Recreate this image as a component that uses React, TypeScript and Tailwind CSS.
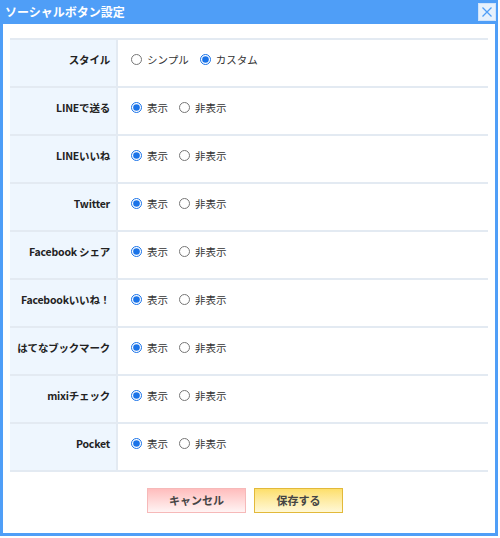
import { useState } from 'react';

type Row = { label: string; options: string[]; initial: number };

const rows: Row[] = [
	{ label: 'スタイル', options: ['シンプル', 'カスタム'], initial: 1 },
	{ label: 'LINEで送る', options: ['表示', '非表示'], initial: 0 },
	{ label: 'LINEいいね', options: ['表示', '非表示'], initial: 0 },
	{ label: 'Twitter', options: ['表示', '非表示'], initial: 0 },
	{ label: 'Facebook シェア', options: ['表示', '非表示'], initial: 0 },
	{ label: 'Facebookいいね！', options: ['表示', '非表示'], initial: 0 },
	{ label: 'はてなブックマーク', options: ['表示', '非表示'], initial: 0 },
	{ label: 'mixiチェック', options: ['表示', '非表示'], initial: 0 },
	{ label: 'Pocket', options: ['表示', '非表示'], initial: 0 },
];

function SettingRow({ row, index }: { row: Row; index: number }) {
	const [value, setValue] = useState(row.initial);
	return (
		<div className="flex h-[48px] border-b-2 border-[#e3eaf2]">
			<div className="w-[108px] shrink-0 whitespace-nowrap border-r-2 border-[#e3eaf2] bg-[#eef6fe] pr-[6px] pt-[12px] text-right text-[10.5px] font-bold tracking-[-0.2px] text-[#222]">
				{row.label}
			</div>
			<div className="flex items-start gap-[11px] pl-[13px] pt-[12px] text-[10.5px] text-[#333]">
				{row.options.map((opt, i) => (
					<label key={opt} className="flex items-center gap-[5px]">
						<input
							type="radio"
							name={`row-${index}`}
							checked={value === i}
							onChange={() => setValue(i)}
							className="m-0 h-[11px] w-[11px] accent-[#1a73e8]"
						/>
						<span>{opt}</span>
					</label>
				))}
			</div>
		</div>
	);
}

export default function App() {
	return (
		<div
			className="h-[538px] w-[500px] bg-white"
			style={{ fontFamily: '"Noto Sans CJK JP", "Noto Sans", sans-serif' }}
		>
			<div className="flex h-[536px] w-[498px] flex-col border-[3px] border-t-0 border-[#4f9ef7] bg-white">
				<div className="-mx-[3px] flex h-[24px] items-center justify-between bg-[#4f9ef7] pl-[5px] pr-[2px]">
					<span className="text-[12px] font-bold text-white">ソーシャルボタン設定</span>
					<button className="grid h-[18px] w-[18px] place-items-center border border-[#cfe3fb] bg-[#e6f1fd]">
						<svg width="12" height="12" viewBox="0 0 12 12">
							<path d="M1.5 1.5 L10.5 10.5 M10.5 1.5 L1.5 10.5" stroke="#4f9ef7" strokeWidth="1.3" />
						</svg>
					</button>
				</div>
				<div className="px-[7px] pt-[14px]">
					<div className="border-t-2 border-[#e3eaf2]">
						{rows.map((row, i) => (
							<SettingRow key={row.label} row={row} index={i} />
						))}
					</div>
					<div className="flex justify-center gap-[8px] pr-[8px] pt-[16px]">
						<button className="h-[25px] w-[99px] border border-[#f6b9b9] bg-gradient-to-b from-[#ffbdbd] to-[#fff4f4] text-[11px] font-bold text-[#444]">
							キャンセル
						</button>
						<button className="h-[25px] w-[89px] border border-[#e2b93a] bg-gradient-to-b from-[#fddf6a] to-[#fff8d6] text-[11px] font-bold text-[#444]">
							保存する
						</button>
					</div>
				</div>
			</div>
		</div>
	);
}
